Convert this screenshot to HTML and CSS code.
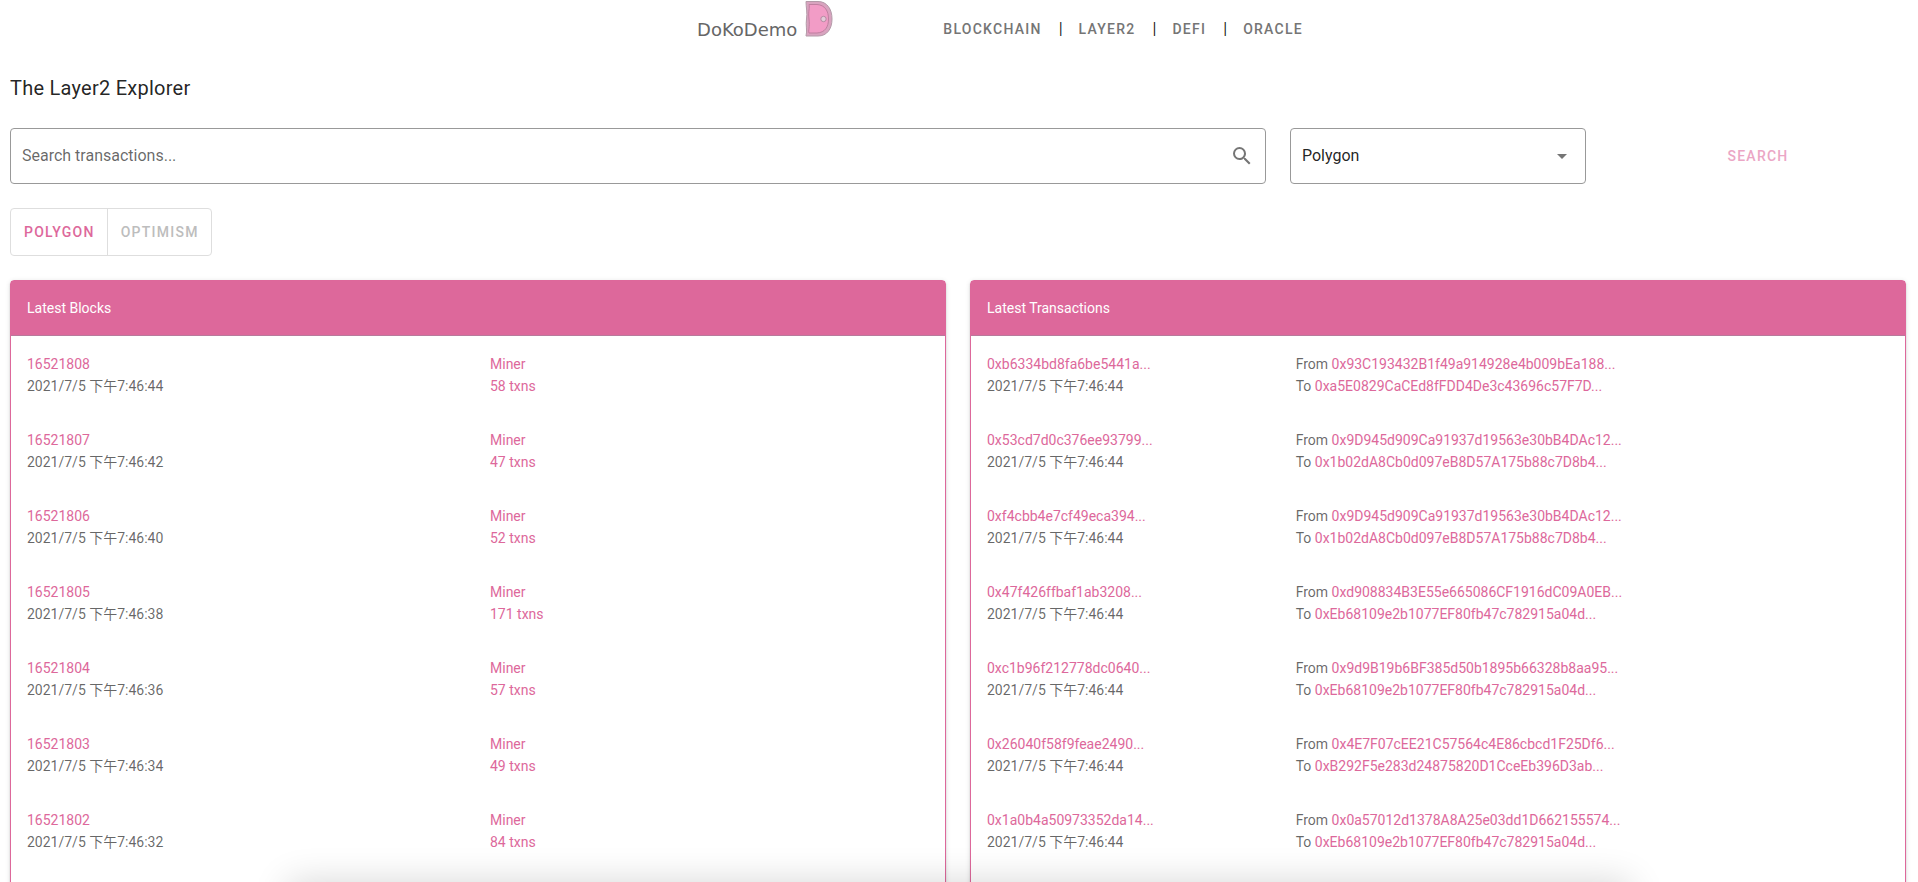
FILE: index.html
```html
<!DOCTYPE html>
<html lang="en">
<head>
<meta charset="utf-8">
<title>DokoDemo – The Layer2 Explorer</title>
<link rel="stylesheet" href="styles.css">
</head>
<body>
<header class="topbar">
  <a class="logo" href="#" aria-label="DoKoDemo home">
    <span class="logo-name">DoKoDemo</span>
    <svg class="logo-door" width="28" height="37" viewBox="0 0 28 37" aria-hidden="true">
      <path d="M1 1.5H13C22 1.5 27 9 27 19S22 36 13 36H1C2.500 31 .5 25 1.500 19S1 7 1 1.500Z" fill="#d9a3bf" stroke="#b39aa8"/>
      <path d="M4 4.500H12C20 5 23.500 11 23.500 19S20 32.500 12 33L4 33C3 31 5 27 4 19S5 8 4 4.500Z" fill="#f29cc6" stroke="#c07fa0"/>
      <circle cx="18.500" cy="19" r="2.700" fill="#e4cbd9" stroke="#b58ba2"/>
    </svg>
  </a>
  <nav class="nav">
    <a class="nav-link" href="#">Blockchain</a><span class="nav-sep">|</span>
    <a class="nav-link" href="#">Layer2</a><span class="nav-sep">|</span>
    <a class="nav-link" href="#">DeFi</a><span class="nav-sep">|</span>
    <a class="nav-link" href="#">Oracle</a>
  </nav>
</header>

<main class="page">
  <h1 class="title">The Layer2 Explorer</h1>

  <form class="search">
    <label class="field field-search">
      <input class="field-control" type="text" placeholder="Search transactions..." aria-label="Search transactions">
      <svg class="field-icon" width="24" height="24" viewBox="0 0 24 24" aria-hidden="true"><path d="M9.500 3A6.500 6.500 0 0 1 16 9.500C16 11.110 15.410 12.590 14.440 13.730L14.710 14H15.500L20.500 19 19 20.500 14 15.500V14.710L13.730 14.440C12.590 15.410 11.110 16 9.500 16A6.500 6.500 0 0 1 9.500 3M9.500 5C7 5 5 7 5 9.500S7 14 9.500 14 14 12 14 9.500 12 5 9.500 5Z"/></svg>
    </label>
    <label class="field field-chain">
      <select class="field-control" aria-label="Chain"><option>Polygon</option><option>Optimism</option></select>
      <svg class="field-icon" width="24" height="24" viewBox="0 0 24 24" aria-hidden="true"><path d="M7 10L12 15L17 10H7Z"/></svg>
    </label>
    <button class="search-button" type="button">Search</button>
  </form>

  <div class="toggle" role="group" aria-label="Network">
    <button class="toggle-button is-active" type="button">Polygon</button>
    <button class="toggle-button" type="button">Optimism</button>
  </div>

  <div class="cards">
    <section class="card blocks">
      <h2 class="card-title">Latest Blocks</h2>
      <ul class="rows">
        <li class="row"><div><a href="#">16521808</a><br>2021/7/5 下午7:46:44</div><div><a href="#">Miner</a><br><a href="#">58 txns</a></div></li>
        <li class="row"><div><a href="#">16521807</a><br>2021/7/5 下午7:46:42</div><div><a href="#">Miner</a><br><a href="#">47 txns</a></div></li>
        <li class="row"><div><a href="#">16521806</a><br>2021/7/5 下午7:46:40</div><div><a href="#">Miner</a><br><a href="#">52 txns</a></div></li>
        <li class="row"><div><a href="#">16521805</a><br>2021/7/5 下午7:46:38</div><div><a href="#">Miner</a><br><a href="#">171 txns</a></div></li>
        <li class="row"><div><a href="#">16521804</a><br>2021/7/5 下午7:46:36</div><div><a href="#">Miner</a><br><a href="#">57 txns</a></div></li>
        <li class="row"><div><a href="#">16521803</a><br>2021/7/5 下午7:46:34</div><div><a href="#">Miner</a><br><a href="#">49 txns</a></div></li>
        <li class="row"><div><a href="#">16521802</a><br>2021/7/5 下午7:46:32</div><div><a href="#">Miner</a><br><a href="#">84 txns</a></div></li>
      </ul>
    </section>
    <section class="card transactions">
      <h2 class="card-title">Latest Transactions</h2>
      <ul class="rows">
        <li class="row"><div><a href="#">0xb6334bd8fa6be5441a...</a><br>2021/7/5 下午7:46:44</div><div>From <a href="#">0x93C193432B1f49a914928e4b009bEa188...</a><br>To <a href="#">0xa5E0829CaCEd8fFDD4De3c43696c57F7D...</a></div></li>
        <li class="row"><div><a href="#">0x53cd7d0c376ee93799...</a><br>2021/7/5 下午7:46:44</div><div>From <a href="#">0x9D945d909Ca91937d19563e30bB4DAc12...</a><br>To <a href="#">0x1b02dA8Cb0d097eB8D57A175b88c7D8b4...</a></div></li>
        <li class="row"><div><a href="#">0xf4cbb4e7cf49eca394...</a><br>2021/7/5 下午7:46:44</div><div>From <a href="#">0x9D945d909Ca91937d19563e30bB4DAc12...</a><br>To <a href="#">0x1b02dA8Cb0d097eB8D57A175b88c7D8b4...</a></div></li>
        <li class="row"><div><a href="#">0x47f426ffbaf1ab3208...</a><br>2021/7/5 下午7:46:44</div><div>From <a href="#">0xd908834B3E55e665086CF1916dC09A0EB...</a><br>To <a href="#">0xEb68109e2b1077EF80fb47c782915a04d...</a></div></li>
        <li class="row"><div><a href="#">0xc1b96f212778dc0640...</a><br>2021/7/5 下午7:46:44</div><div>From <a href="#">0x9d9B19b6BF385d50b1895b66328b8aa95...</a><br>To <a href="#">0xEb68109e2b1077EF80fb47c782915a04d...</a></div></li>
        <li class="row"><div><a href="#">0x26040f58f9feae2490...</a><br>2021/7/5 下午7:46:44</div><div>From <a href="#">0x4E7F07cEE21C57564c4E86cbcd1F25Df6...</a><br>To <a href="#">0xB292F5e283d24875820D1CceEb396D3ab...</a></div></li>
        <li class="row"><div><a href="#">0x1a0b4a50973352da14...</a><br>2021/7/5 下午7:46:44</div><div>From <a href="#">0x0a57012d1378A8A25e03dd1D662155574...</a><br>To <a href="#">0xEb68109e2b1077EF80fb47c782915a04d...</a></div></li>
      </ul>
    </section>
  </div>
</main>
<div class="bottom-sheet" aria-hidden="true"></div>
</body>
</html>
```
FILE: styles.css
```css
:root {
  --pink: #dd689b;
  --text: rgba(0, 0, 0, .87);
  --muted: rgba(0, 0, 0, .6);
}

* { box-sizing: border-box; }

html { scrollbar-width: none; }

body {
  margin: 0;
  background: #fff;
  color: var(--text);
  font-family: Roboto, "Noto Sans CJK TC", sans-serif;
  font-size: 16px;
  line-height: 24px;
}

a { color: var(--pink); text-decoration: none; }

.topbar {
  display: flex;
  justify-content: center;
  height: 58px;
}

.logo {
  display: flex;
  align-items: flex-start;
  gap: 8px;
  padding: 0 94px 0 98px;
}

.logo-name {
  padding-top: 18px;
  color: #666;
  font-family: "DejaVu Sans", sans-serif;
  font-size: 18px;
}

.nav { display: flex; align-items: center; }

.nav-link,
.search-button,
.toggle-button {
  font-family: inherit;
  font-size: 14px;
  font-weight: 500;
  letter-spacing: .09em;
  text-transform: uppercase;
}

.nav-link { padding: 0 16px; color: #757575; }
.nav-sep { padding-left: 1px; }

.page { padding: 16px 12px 24px 10px; }

.title {
  margin: 0 0 26px;
  font-size: 20px;
  font-weight: 400;
  line-height: 28px;
  letter-spacing: .0125em;
}

.search {
  display: grid;
  grid-template-columns: repeat(12, 1fr);
  column-gap: 24px;
  align-items: center;
}

.field {
  display: flex;
  align-items: center;
  height: 56px;
  padding: 0 11px;
  border: 1px solid #999;
  border-radius: 4px;
}

.field-search { grid-column: span 8; }
.field-chain { grid-column: span 2; }

.field-control {
  flex: 1;
  min-width: 0;
  padding: 0;
  border: 0;
  outline: 0;
  background: none;
  color: var(--text);
  font-family: inherit;
  font-size: 16px;
  line-height: 24px;
  appearance: none;
}

.field-control::placeholder { color: var(--muted); opacity: 1; }

.field-icon { flex: none; fill: #757575; }

.search-button {
  grid-column: span 2;
  justify-self: center;
  padding: 8px 16px;
  border: 0;
  background: none;
  color: #eba6c5;
}

.toggle {
  display: inline-flex;
  margin: 24px 0;
  border: 1px solid #dedede;
  border-radius: 4px;
  vertical-align: top;
}

.toggle-button {
  height: 46px;
  padding: 0 12px 0 13px;
  border: 0;
  background: none;
  color: #bdbdbd;
}

.toggle-button + .toggle-button { border-left: 1px solid #dedede; }
.toggle-button.is-active { color: var(--pink); }

.cards {
  display: grid;
  grid-template-columns: 1fr 1fr;
  gap: 24px;
}

.card {
  border: 1px solid var(--pink);
  border-radius: 4px;
  color: var(--muted);
  font-size: 14px;
  line-height: 22px;
  box-shadow: 0 3px 1px -2px rgba(0, 0, 0, .2), 0 2px 2px rgba(0, 0, 0, .14), 0 1px 5px rgba(0, 0, 0, .12);
}

.card-title {
  margin: 0;
  padding: 16px;
  border-bottom: 1px solid #b87a9c;
  background: var(--pink);
  color: #fff;
  font-size: 14px;
  font-weight: 400;
}

.rows { margin: 0; padding: 1px 0 24px; list-style: none; }

.row {
  display: grid;
  grid-template-columns: repeat(12, 1fr);
  column-gap: 24px;
  padding: 16px;
}

.blocks .row > div { grid-column: span 6; }
.transactions .row > :first-child { grid-column: span 4; }
.transactions .row > :last-child { grid-column: span 8; }

.bottom-sheet {
  position: fixed;
  top: 100%;
  left: 15%;
  right: 15%;
  height: 80px;
  box-shadow: 0 0 36px rgba(0, 0, 0, .16);
  pointer-events: none;
}
```
